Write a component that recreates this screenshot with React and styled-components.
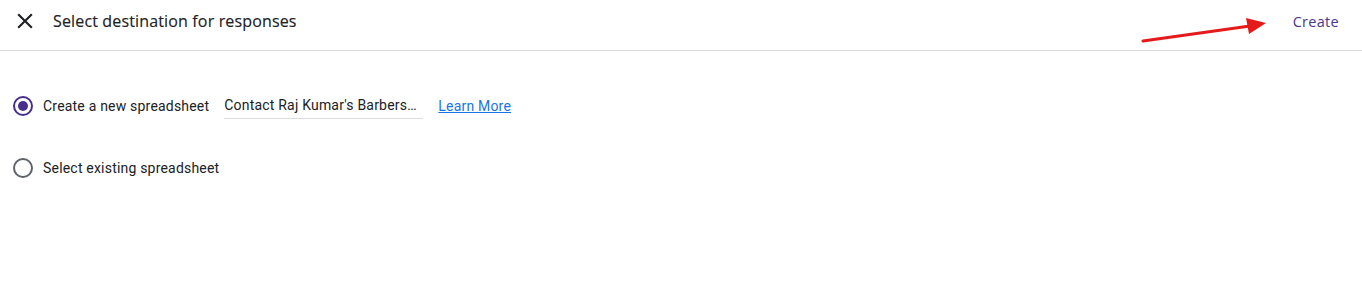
import React from "react";
import styled, { createGlobalStyle } from "styled-components";

const Global = createGlobalStyle`
  html, body { margin: 0; padding: 0; background: #fff; }
  body { font-family: Roboto, "Noto Sans", Arial, sans-serif; color: #202124; }
`;

const Page = styled.div`
  width: 1362px;
  height: 292px;
  background: #fff;
  position: relative;
`;

const Header = styled.header`
  height: 51px;
  box-sizing: border-box;
  border-bottom: 1px solid #dadce0;
  display: flex;
  align-items: center;
  padding: 0 23px 8px 12px;
`;

const CloseButton = styled.button`
  width: 26px;
  height: 26px;
  padding: 0;
  border: 0;
  background: none;
  display: flex;
  align-items: center;
  justify-content: center;
  color: #202124;
  margin-right: 15px;
`;

const Title = styled.h1`
  margin: 0;
  font-family: "Open Sans", Roboto, sans-serif;
  font-size: 16px;
  font-weight: 500;
  color: #202124;
  letter-spacing: 0.15px;
  flex: 1;
  -webkit-text-stroke: 0.15px #202124;
`;

const CreateButton = styled.button`
  border: 0;
  background: none;
  padding: 0;
  font-family: "Open Sans", Roboto, sans-serif;
  font-size: 14.5px;
  font-weight: 500;
  letter-spacing: 0.3px;
  color: #4a358f;
`;

const Arrow = styled.svg`
  position: absolute;
  left: 1138px;
  top: 14px;
`;

const Body = styled.div`
  padding: 43px 0 0 13px;
  display: flex;
  flex-direction: column;
  gap: 38px;
`;

const Row = styled.div`
  display: flex;
  align-items: center;
  height: 24px;
`;

const Radio = styled.span`
  width: 20px;
  height: 20px;
  box-sizing: border-box;
  border-radius: 50%;
  border: 2px solid ${(p) => (p.$checked ? "#472f8e" : "#5f6368")};
  display: flex;
  align-items: center;
  justify-content: center;
  margin-right: 10px;
  &::after {
    content: "";
    width: 10px;
    height: 10px;
    border-radius: 50%;
    background: ${(p) => (p.$checked ? "#472f8e" : "transparent")};
  }
`;

const Label = styled.span`
  font-size: 14px;
  color: #202124;
  letter-spacing: 0.2px;
`;

const NameField = styled.div`
  margin-left: 15px;
  width: 199px;
  height: 24px;
  box-sizing: border-box;
  border-bottom: 1px solid #dadce0;
  font-size: 14px;
  color: #202124;
  letter-spacing: 0.2px;
  padding-top: 2px;
  white-space: nowrap;
  margin-top: 2px;
`;

const LearnLink = styled.a`
  margin-left: 15px;
  font-size: 14px;
  color: #1a73e8;
  text-decoration: underline;
  letter-spacing: 0.2px;
`;

export default function App() {
  return (
    <Page>
      <Global />
      <Header>
        <CloseButton aria-label="Close">
          <svg width="26" height="26" viewBox="0 0 24 24" fill="#202124">
            <path d="M19 6.41 17.59 5 12 10.59 6.41 5 5 6.41 10.59 12 5 17.59 6.41 19 12 13.41 17.59 19 19 17.59 13.41 12z" />
          </svg>
        </CloseButton>
        <Title>Select destination for responses</Title>
        <CreateButton>Create</CreateButton>
      </Header>
      <Arrow width="140" height="34" viewBox="0 0 140 34">
        <line x1="5" y1="27" x2="112" y2="12" stroke="#e51b1b" strokeWidth="3" strokeLinecap="round" />
        <polygon points="108,4 128,9 111,20" fill="#e51b1b" />
      </Arrow>
      <Body>
        <Row>
          <Radio $checked />
          <Label>Create a new spreadsheet</Label>
          <NameField>Contact Raj Kumar's Barbers…</NameField>
          <LearnLink href="#">Learn More</LearnLink>
        </Row>
        <Row>
          <Radio />
          <Label>Select existing spreadsheet</Label>
        </Row>
      </Body>
    </Page>
  );
}
